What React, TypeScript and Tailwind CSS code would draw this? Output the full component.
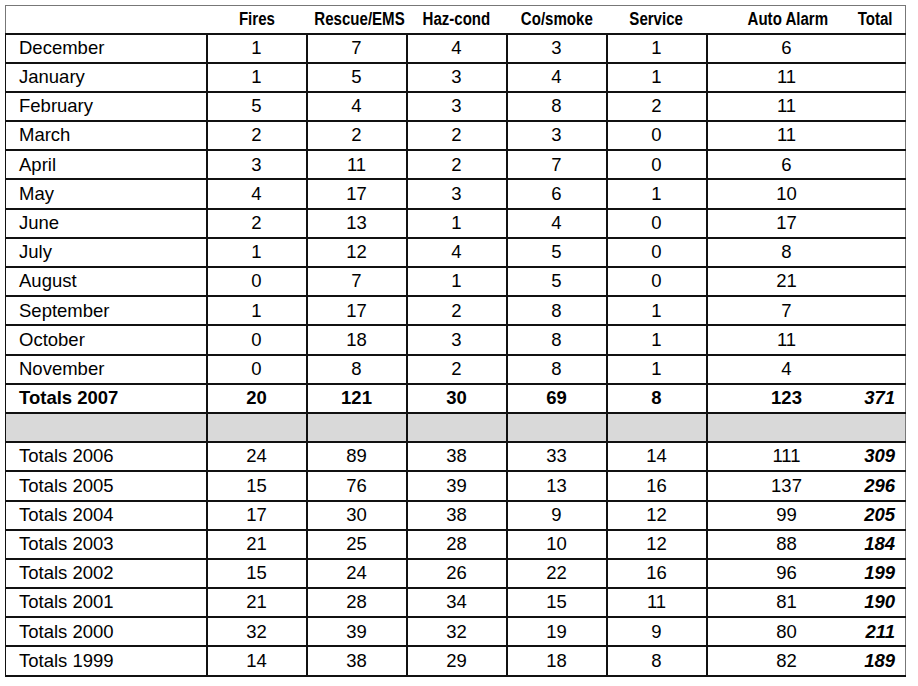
const months: [string, number[]][] = [
  ['December', [1, 7, 4, 3, 1, 6]],
  ['January', [1, 5, 3, 4, 1, 11]],
  ['February', [5, 4, 3, 8, 2, 11]],
  ['March', [2, 2, 2, 3, 0, 11]],
  ['April', [3, 11, 2, 7, 0, 6]],
  ['May', [4, 17, 3, 6, 1, 10]],
  ['June', [2, 13, 1, 4, 0, 17]],
  ['July', [1, 12, 4, 5, 0, 8]],
  ['August', [0, 7, 1, 5, 0, 21]],
  ['September', [1, 17, 2, 8, 1, 7]],
  ['October', [0, 18, 3, 8, 1, 11]],
  ['November', [0, 8, 2, 8, 1, 4]],
];

const years: [string, number[], number][] = [
  ['Totals 2006', [24, 89, 38, 33, 14, 111], 309],
  ['Totals 2005', [15, 76, 39, 13, 16, 137], 296],
  ['Totals 2004', [17, 30, 38, 9, 12, 99], 205],
  ['Totals 2003', [21, 25, 28, 10, 12, 88], 184],
  ['Totals 2002', [15, 24, 26, 22, 16, 96], 199],
  ['Totals 2001', [21, 28, 34, 15, 11, 81], 190],
  ['Totals 2000', [32, 39, 32, 19, 9, 80], 211],
  ['Totals 1999', [14, 38, 29, 18, 8, 82], 189],
];

const headers = ['Fires', 'Rescue/EMS', 'Haz-cond', 'Co/smoke', 'Service'];

const cell = 'border-x-2 border-y-2 border-[#111] text-center px-0 py-0';

// condensed bold heading text
const Head = ({ children }: { children: string }) => (
  <span className="inline-block scale-x-[0.86] whitespace-nowrap">{children}</span>
);

const Row = ({ label, values, total, bold }: { label: string; values: number[]; total?: number; bold?: boolean }) => (
  <tr className={`h-[29.2px] ${bold ? 'font-bold' : ''}`}>
    <td className="border-y-2 border-r-2 border-l border-[#111] pl-[13px] pr-0 py-0 text-left">{label}</td>
    {values.slice(0, 5).map((v, i) => (
      <td key={i} className={cell}>
        {v}
      </td>
    ))}
    <td className="border-y-2 border-l-2 border-[#111] text-center pl-[14px] pr-0 py-0">{values[5]}</td>
    <td className="border-y-2 border-r border-[#111] border-r-[#777] text-right pr-[10px] pl-0 py-0 font-bold italic">
      {total ?? ''}
    </td>
  </tr>
);

export default function App() {
  return (
    <div className="bg-white w-[918px] h-[686px] pt-[5px] pl-[5px] text-black" style={{ fontFamily: '"Liberation Sans", Arial, sans-serif' }}>
      <table className="border-collapse w-[901px] table-fixed text-[18.5px] leading-none">
        <colgroup>
          <col className="w-[201px]" />
          <col className="w-[100px]" />
          <col className="w-[100px]" />
          <col className="w-[100px]" />
          <col className="w-[100px]" />
          <col className="w-[100px]" />
          <col className="w-[145px]" />
          <col />
        </colgroup>
        <thead>
          <tr className="h-[28px] text-[17.5px] font-bold">
            <th className="border-t border-l border-[#777] border-b-2 border-b-[#111] p-0"></th>
            {headers.map((h) => (
              <th key={h} className="border-t border-[#777] border-b-2 border-b-[#111] text-center p-0">
                <Head>{h}</Head>
              </th>
            ))}
            <th className="border-t border-[#777] border-b-2 border-b-[#111] text-center pl-[18px] pr-0 py-0">
              <Head>Auto Alarm</Head>
            </th>
            <th className="border-t border-r border-[#777] border-b-2 border-b-[#111] text-right pr-[12px] pl-0 py-0">
              <span className="inline-block scale-x-[0.86] origin-right">Total</span>
            </th>
          </tr>
        </thead>
        <tbody>
          {months.map(([m, v]) => (
            <Row key={m} label={m} values={v} />
          ))}
          <Row label="Totals 2007" values={[20, 121, 30, 69, 8, 123]} total={371} bold />
          <tr className="h-[29.2px] bg-[#d9d9d9]">
            <td className="border-y-2 border-r-2 border-l border-[#111] p-0"></td>
            {[0, 1, 2, 3, 4].map((i) => (
              <td key={i} className={cell}></td>
            ))}
            <td className="border-y-2 border-l-2 border-[#111] p-0"></td>
            <td className="border-y-2 border-r border-[#111] border-r-[#777] p-0"></td>
          </tr>
          {years.map(([y, v, t]) => (
            <Row key={y} label={y} values={v} total={t} />
          ))}
        </tbody>
      </table>
    </div>
  );
}
